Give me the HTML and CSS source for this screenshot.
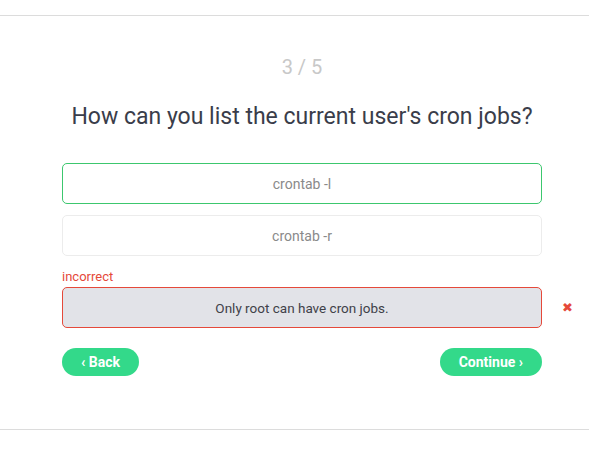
FILE: index.html
```html
<!DOCTYPE html>
<html>
<head>
<meta charset="utf-8">
<link rel="stylesheet" href="styles.css">
</head>
<body>
<div class="quiz">
  <div class="content">
    <div class="progress">3 / 5</div>
    <h1 class="question">How can you list the current user's cron jobs?</h1>
    <div class="options">
      <div class="option correct">crontab -l</div>
      <div class="option">crontab -r</div>
      <div class="group">
        <div class="label">incorrect</div>
        <div class="row">
          <div class="option wrong">Only root can have cron jobs.</div>
          <span class="mark">✖</span>
        </div>
      </div>
    </div>
    <div class="nav">
      <button class="btn">‹ Back</button>
      <button class="btn">Continue ›</button>
    </div>
  </div>
</div>
</body>
</html>
```
FILE: styles.css
```css
html, body {
  margin: 0;
  padding: 0;
  background: #fff;
}
body {
  font-family: Roboto, "Liberation Sans", sans-serif;
  padding-top: 15px;
}
.quiz {
  border-top: 1px solid #dcdcdc;
  border-bottom: 1px solid #dcdcdc;
  height: 415px;
  box-sizing: border-box;
}
.content {
  width: 480px;
  margin-left: 62px;
  padding-top: 39px;
}
.progress {
  text-align: center;
  font-size: 20px;
  color: #c8c8c8;
  line-height: 24px;
}
.question {
  margin: 24px 0 0;
  text-align: center;
  font-weight: 400;
  font-size: 23px;
  line-height: 28px;
  color: #3a3d4a;
}
.options {
  margin-top: 32px;
  display: flex;
  flex-direction: column;
  gap: 11px;
}
.option {
  height: 41px;
  box-sizing: border-box;
  border: 1px solid #ececec;
  border-radius: 5px;
  display: flex;
  align-items: center;
  justify-content: center;
  font-size: 14px;
  color: #8a8a8a;
  background: #fff;
}
.option.correct {
  border-color: #3cc76e;
}
.option.wrong {
  border-color: #e5493a;
  background: #e2e3e8;
  color: #3f4148;
  font-size: 13.5px;
  width: 480px;
  flex: none;
}
.group {
  margin-top: 2px;
}
.label {
  color: #e5493a;
  font-size: 13px;
  line-height: 16px;
  margin-bottom: 2px;
}
.row {
  display: flex;
  align-items: center;
}
.mark {
  margin-left: 20px;
  color: #e5493a;
  font-size: 13px;
}
.nav {
  margin-top: 20px;
  display: flex;
  justify-content: space-between;
}
.btn {
  border: none;
  background: #33d98a;
  color: #fff;
  font-family: Roboto, "Liberation Sans", sans-serif;
  font-weight: 700;
  font-size: 14px;
  height: 28px;
  border-radius: 14px;
  padding: 0 19px;
}
```
